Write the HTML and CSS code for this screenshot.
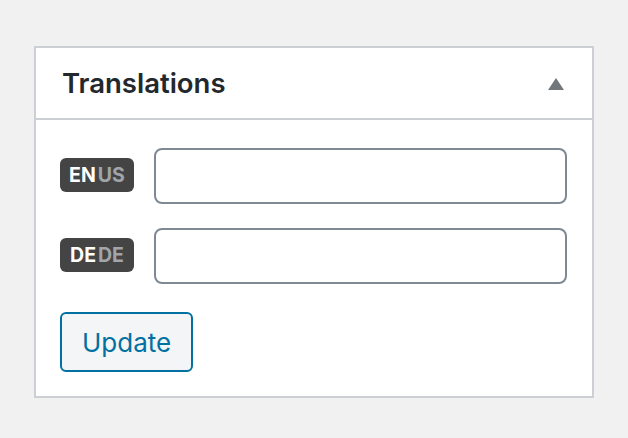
FILE: index.html
```html
<!DOCTYPE html>
<html lang="en">
<head>
<meta charset="utf-8">
<title>Translations</title>
<link rel="stylesheet" href="styles.css">
</head>
<body>
<div class="postbox">
  <div class="postbox-header">
    <h2 class="hndle">Translations</h2>
    <span class="toggle" aria-hidden="true"></span>
  </div>
  <div class="inside">
    <div class="row">
      <span class="locale"><b>EN</b><i>US</i></span>
      <input class="field" type="text">
    </div>
    <div class="row">
      <span class="locale"><b>DE</b><i>DE</i></span>
      <input class="field" type="text">
    </div>
    <div class="actions">
      <button class="button" type="button">Update</button>
    </div>
  </div>
</div>
</body>
</html>
```

FILE: styles.css
```css
html, body {
  margin: 0;
  padding: 0;
}
body {
  background: #f1f1f1;
  font-family: Inter, "Noto Sans", "Liberation Sans", sans-serif;
  padding: 46px 34px 0 34px;
}
.postbox {
  width: 560px;
  box-sizing: border-box;
  background: #fff;
  border: 2px solid #ccd0d4;
}
.postbox-header {
  display: flex;
  align-items: center;
  justify-content: space-between;
  height: 70px;
  border-bottom: 2px solid #ccd0d4;
  padding: 0 28px 0 26px;
}
.hndle {
  margin: 0;
  font-size: 27.5px;
  font-weight: 600;
  color: #23282d;
  letter-spacing: 0;
}
.toggle {
  width: 0;
  height: 0;
  border-left: 8px solid transparent;
  border-right: 8px solid transparent;
  border-bottom: 12px solid #72777c;
  margin-top: 2px;
}
.inside {
  padding: 28px 25px 24px 24px;
}
.row {
  display: flex;
  align-items: center;
  gap: 20px;
  margin-bottom: 24px;
}
.row + .row {
  margin-bottom: 0;
}
.locale {
  flex: none;
  display: inline-flex;
  align-items: center;
  justify-content: center;
  width: 74px;
  height: 34px;
  box-sizing: border-box;
  background: #444;
  border-radius: 6px;
  font-size: 19.5px;
  font-weight: 700;
  letter-spacing: 0;
  margin-top: -2px;
}
.locale b {
  color: #fff;
  font-weight: 700;
}
.locale i {
  font-style: normal;
  color: #a0a5aa;
  margin-left: 2px;
}
.field {
  flex: 1;
  min-width: 0;
  height: 56px;
  box-sizing: border-box;
  border: 2px solid #7e8993;
  border-radius: 8px;
  background: #fff;
  margin: 0;
  padding: 0 16px;
  font-size: 26px;
  font-family: inherit;
}
.actions {
  margin-top: 28px;
}
.button {
  height: 60px;
  padding: 0 20px;
  box-sizing: border-box;
  border: 2px solid #0071a1;
  border-radius: 6px;
  background: #f3f5f6;
  color: #0071a1;
  font-family: inherit;
  font-size: 26px;
  font-weight: 400;
  cursor: pointer;
}
```
